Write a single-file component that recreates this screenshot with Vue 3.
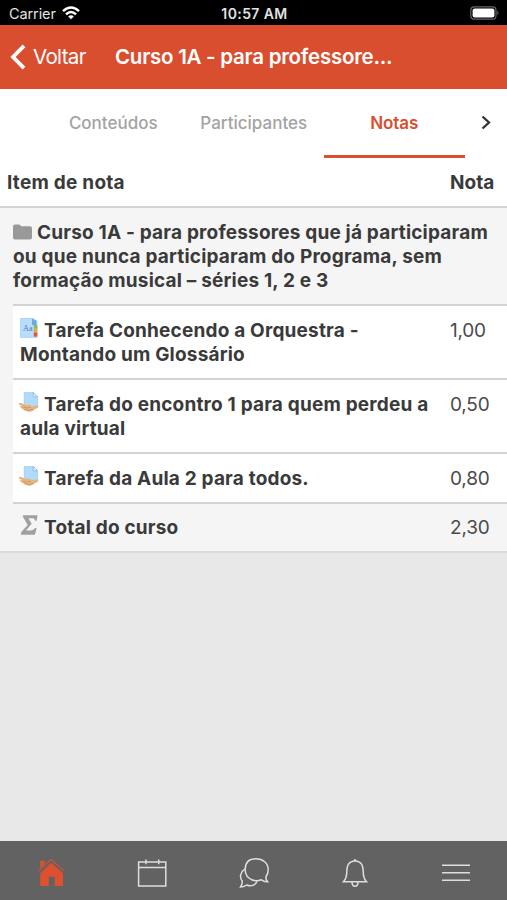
<template>
  <div class="app-screen">
    <!-- Barra de status -->
    <div class="status-bar">
      <div class="carrier">
        <span>Carrier</span>
        <svg class="wifi" viewBox="0 0 18 14">
          <path d="M1 5.2 Q9 -2.2 17 5.2" />
          <path d="M4 8.3 Q9 3.7 14 8.3" />
          <path class="solid" d="M6.2 10.4 Q9 8 11.8 10.4 L9 13.3Z" />
        </svg>
      </div>
      <span class="clock">10:57 AM</span>
      <svg class="battery" viewBox="0 0 30 14">
        <rect x=".8" y=".8" width="25.2" height="12.4" rx="3.5" fill="none" stroke="#666" stroke-width="1.2" />
        <rect x="2.6" y="2.4" width="21.8" height="9.2" rx="2" fill="#fff" />
        <path d="M27.3 4.8 Q29.8 7 27.3 9.2Z" fill="#666" />
      </svg>
    </div>

    <!-- Cabeçalho -->
    <header class="nav-header">
      <button class="back-button">
        <svg class="back-icon" viewBox="0 0 16 26">
          <path d="M14 1.8 L3 13 L14 24.2" />
        </svg>
        <span>Voltar</span>
      </button>
      <h1 class="title">Curso 1A - para professore...</h1>
    </header>

    <!-- Abas -->
    <nav class="tabs">
      <button
        v-for="tab in tabs"
        :key="tab"
        class="tab"
        :class="{ active: tab === activeTab }"
        @click="activeTab = tab"
      >{{ tab }}</button>
      <button class="tab-next">
        <svg viewBox="0 0 10 15"><path d="M1.5 1.5 L8 7.5 L1.5 13.5" /></svg>
      </button>
    </nav>

    <!-- Tabela de notas -->
    <main class="grades">
      <div class="grades-head">
        <span class="head-item">Item de nota</span>
        <span class="head-grade">Nota</span>
      </div>

      <div class="course-row">
        <div class="line">
          <svg class="folder" viewBox="0 0 19 16">
            <path d="M0 2.5 Q0 .5 2 .5 H6 Q7.5 .5 8 2.3 H17 Q19 2.3 19 4.3 V13.5 Q19 15.5 17 15.5 H2 Q0 15.5 0 13.5Z" />
          </svg>
          <span>Curso 1A - para professores que já participaram</span>
        </div>
        <div class="line">ou que nunca participaram do Programa, sem</div>
        <div class="line">formação musical – séries 1, 2 e 3</div>
      </div>

      <div class="items">
        <div v-for="item in items" :key="item.lines[0]" class="item-row" :class="item.icon">
          <div class="item-name">
            <div class="line">
              <svg v-if="item.icon === 'glossary'" class="item-icon" viewBox="0 0 20 20">
                <path d="M1.5 0 H14 L18 4 V19.5 H1.5Z" fill="#b9dcfb" stroke="#9ccaf3" stroke-width=".6" />
                <path d="M13 .8 L17.5 2.5 V7 H13Z" fill="#6ba8ea" />
                <rect x="14.8" y="7" width="3.6" height="3.8" fill="#7bc45d" />
                <rect x="14.8" y="10.8" width="3.6" height="3.8" fill="#eda63c" />
                <rect x="14.8" y="14.6" width="3.6" height="4" fill="#dc5540" />
                <text x="4" y="13.3" class="glyph">Aa</text>
              </svg>
              <svg v-else-if="item.icon === 'task'" class="item-icon" viewBox="0 0 20 20">
                <path d="M5.2 .4 H14.2 L18.5 4.8 V16 H5.2Z" fill="#b2dafb" stroke="#8fc2ef" stroke-width=".6" />
                <path d="M14.2 .4 V4.8 H18.5Z" fill="#e4f3fe" stroke="#75b1e6" stroke-width=".7" />
                <path d="M0 11 Q2.5 10.6 5.2 12.4 L11 13 Q12.8 13.4 12 14.6 L19 13.3 Q20 13.8 18.8 15.3 L13.4 18.9 Q10.5 20.3 7.2 19 L2.2 16.3 L.6 14.6 L3 14 L0 12.4Z" fill="#e6b47f" />
                <path d="M4 15.2 Q8 16.7 12 15.2 M5 17.6 Q10 19.2 14 17.4" fill="none" stroke="#c98d58" stroke-width=".7" />
              </svg>
              <svg v-else class="item-icon" viewBox="0 0 20 20">
                <path d="M4.2 .3 H18.6 L17.6 5.8 H15.9 Q16 3.2 13.7 3.2 H9.4 L12.7 8.8 L7 15.4 H12 Q14.7 15.4 16 13 H17.6 L15.9 19.8 H1.8 L2.3 17.1 L8.7 9.9 L3.8 1.6Z" fill="#a0a0a0" />
              </svg>
              <span>{{ item.lines[0] }}</span>
            </div>
            <div v-for="extra in item.lines.slice(1)" :key="extra" class="line">{{ extra }}</div>
          </div>
          <span class="grade">{{ item.grade }}</span>
        </div>
      </div>
    </main>

    <!-- Barra inferior -->
    <footer class="tab-bar">
      <button class="bar-button home">
        <svg viewBox="0 0 30 30">
          <path d="M4.2 15.2 L15.2 4.8 L27 15.2 V28 H18.6 V18.7 H12.8 V28 H4.2Z" fill="currentColor" />
          <path d="M2.8 12.9 L15.2 1.4 L28 12.9" stroke="currentColor" stroke-width="1.1" fill="none" />
          <path d="M4.2 2.8 H8.7 V6 L4.2 10.2Z" fill="currentColor" />
        </svg>
      </button>
      <button class="bar-button">
        <svg viewBox="0 0 30 30" class="outline">
          <path d="M1.6 4 H28.8 V28 H1.6Z M1.6 9.6 H28.8" />
          <path d="M9 1.4 V6.2 M21.7 1.4 V6.2" />
        </svg>
      </button>
      <button class="bar-button">
        <svg viewBox="0 0 30 30" class="outline">
          <path d="M17 .8 C9 .8 6.2 5.8 6.2 11.5 C6.2 18.6 11.5 22.8 17.5 22.8 Q20 22.8 22.3 21.8 Q24.8 24 28.6 23.8 Q26.6 21.5 27 18.7 Q29.2 15.8 29.2 11.6 C29.2 5 23.7 .8 17 .8Z" />
          <path d="M5.8 11.2 C1.2 14 .3 19.4 3.2 23 Q3.4 26.5 1.6 29 Q5.6 28.8 7.8 27 C12 28.8 16.5 27.4 18 23.3" />
        </svg>
      </button>
      <button class="bar-button">
        <svg viewBox="0 0 30 30" class="outline">
          <path d="M3.5 23.7 Q6.4 20.8 6.7 15.5 Q6.8 9 8.3 6.4 Q10.6 3.1 15 3.1 Q19.4 3.1 21.7 6.4 Q23.2 9 23.3 15.5 Q23.6 20.8 26.5 23.7Z" />
          <path d="M12 24 Q12 28.2 15 28.2 Q18 28.2 18 24" />
          <path d="M14.2 2 H15.8" stroke-width="2" />
        </svg>
      </button>
      <button class="bar-button">
        <svg viewBox="0 0 30 30" class="outline">
          <path d="M1 7.2 H29 M1 14.8 H29 M1 22.3 H29" />
        </svg>
      </button>
    </footer>
  </div>
</template>

<script setup>
import { ref } from 'vue';

const tabs = ['Conteúdos', 'Participantes', 'Notas'];
const activeTab = ref('Notas');

const items = [
  { icon: 'glossary', lines: ['Tarefa Conhecendo a Orquestra -', 'Montando um Glossário'], grade: '1,00' },
  { icon: 'task', lines: ['Tarefa do encontro 1 para quem perdeu a', 'aula virtual'], grade: '0,50' },
  { icon: 'task', lines: ['Tarefa da Aula 2 para todos.'], grade: '0,80' },
  { icon: 'total', lines: ['Total do curso'], grade: '2,30' },
];
</script>

<style>
body { background: #e8e8e8; }
</style>

<style scoped>
.app-screen {
  width: 507px;
  height: 900px;
  display: flex;
  flex-direction: column;
  overflow: hidden;
  background: #e8e8e8;
  color: #3a3a3a;
  font-family: Inter, 'Liberation Sans', sans-serif;
}
button {
  margin: 0;
  padding: 0;
  border: none;
  background: none;
  color: inherit;
  font: inherit;
  cursor: pointer;
}
svg { display: block; flex-shrink: 0; }

.status-bar {
  display: grid;
  grid-template-columns: 1fr auto 1fr;
  align-items: center;
  height: 25px;
  padding: 2px 7px 0 9px;
  box-sizing: border-box;
  background: #000;
  color: #e2e2e2;
  font-size: 14.5px;
}
.carrier { display: flex; align-items: center; gap: 6px; letter-spacing: -0.1px; }
.wifi { width: 18px; height: 14px; margin-top: -2px; fill: none; stroke: #fff; stroke-width: 2.5; }
.wifi .solid { fill: #fff; stroke: none; }
.clock { font-size: 14px; font-weight: 600; letter-spacing: 0.4px; }
.battery { width: 30px; height: 14px; margin-top: -1px; justify-self: end; }

.nav-header {
  display: flex;
  align-items: center;
  height: 64px;
  padding: 0 0 1px 10px;
  box-sizing: border-box;
  background: #d94e2f;
  color: #fff;
}
.back-button { display: flex; align-items: center; gap: 7px; width: 105px; font-size: 20.5px; letter-spacing: -0.65px; }
.back-icon { width: 16px; height: 26px; fill: none; stroke: #fff; stroke-width: 3.8; }
.title { margin: 0; font-size: 20.5px; font-weight: 600; letter-spacing: -0.26px; white-space: nowrap; }

.tabs {
  display: flex;
  height: 69px;
  padding-left: 43px;
  background: #fff;
}
.tab {
  width: 140.5px;
  padding-top: 1px;
  box-sizing: border-box;
  border-bottom: 3px solid transparent;
  color: #a3a3a3;
  font-size: 17px;
  font-weight: 500;
}
.tab.active { color: #d94e2f; border-bottom-color: #d94e2f; font-weight: 600; letter-spacing: -0.1px; }
.tab-next { display: flex; flex: 1; align-items: center; justify-content: center; padding-bottom: 2px; }
.tab-next svg { width: 10px; height: 15px; fill: none; stroke: #333; stroke-width: 2.3; }

.grades { background: #f5f5f5; font-size: 19px; line-height: 24.4px; border-bottom: 2px solid #dadada; }
.line { display: flex; white-space: nowrap; font-weight: 700; letter-spacing: 0.19px; }
.grades-head {
  display: flex;
  align-items: center;
  height: 50px;
  padding: 2px 0 0 7px;
  box-sizing: border-box;
  border-bottom: 2px solid #d2d2d2;
  background: #fff;
  font-weight: 700;
}
.head-item { width: 443px; letter-spacing: 0.25px; }
.course-row { height: 96px; padding: 12.6px 0 0 13px; box-sizing: border-box; }
.folder { width: 19px; height: 16px; margin: 3px 5px 0 0; fill: #999; }

.items { margin-left: 13px; }
.item-row {
  display: flex;
  padding: 13px 0 10.2px 7px;
  border-top: 2px solid #d2d2d2;
  background: #fff;
}
.item-row.total { padding-top: 12.6px; background: #f5f5f5; }
.item-name { width: 430px; }
.item-icon { width: 20px; height: 20px; margin: -1px 5px 0 -1px; }
.glyph { font: 8px 'Liberation Serif', serif; fill: #477bb8; }
.grade { color: #4a4a4a; letter-spacing: -0.2px; }

.tab-bar { display: flex; height: 59px; margin-top: auto; background: #626262; }
.bar-button { display: flex; flex: 1; align-items: center; justify-content: center; padding-top: 4px; }
.bar-button svg { width: 30px; height: 30px; }
.outline { fill: none; stroke: #dedede; stroke-width: 1.5; }
.home { color: #df5030; }
</style>
